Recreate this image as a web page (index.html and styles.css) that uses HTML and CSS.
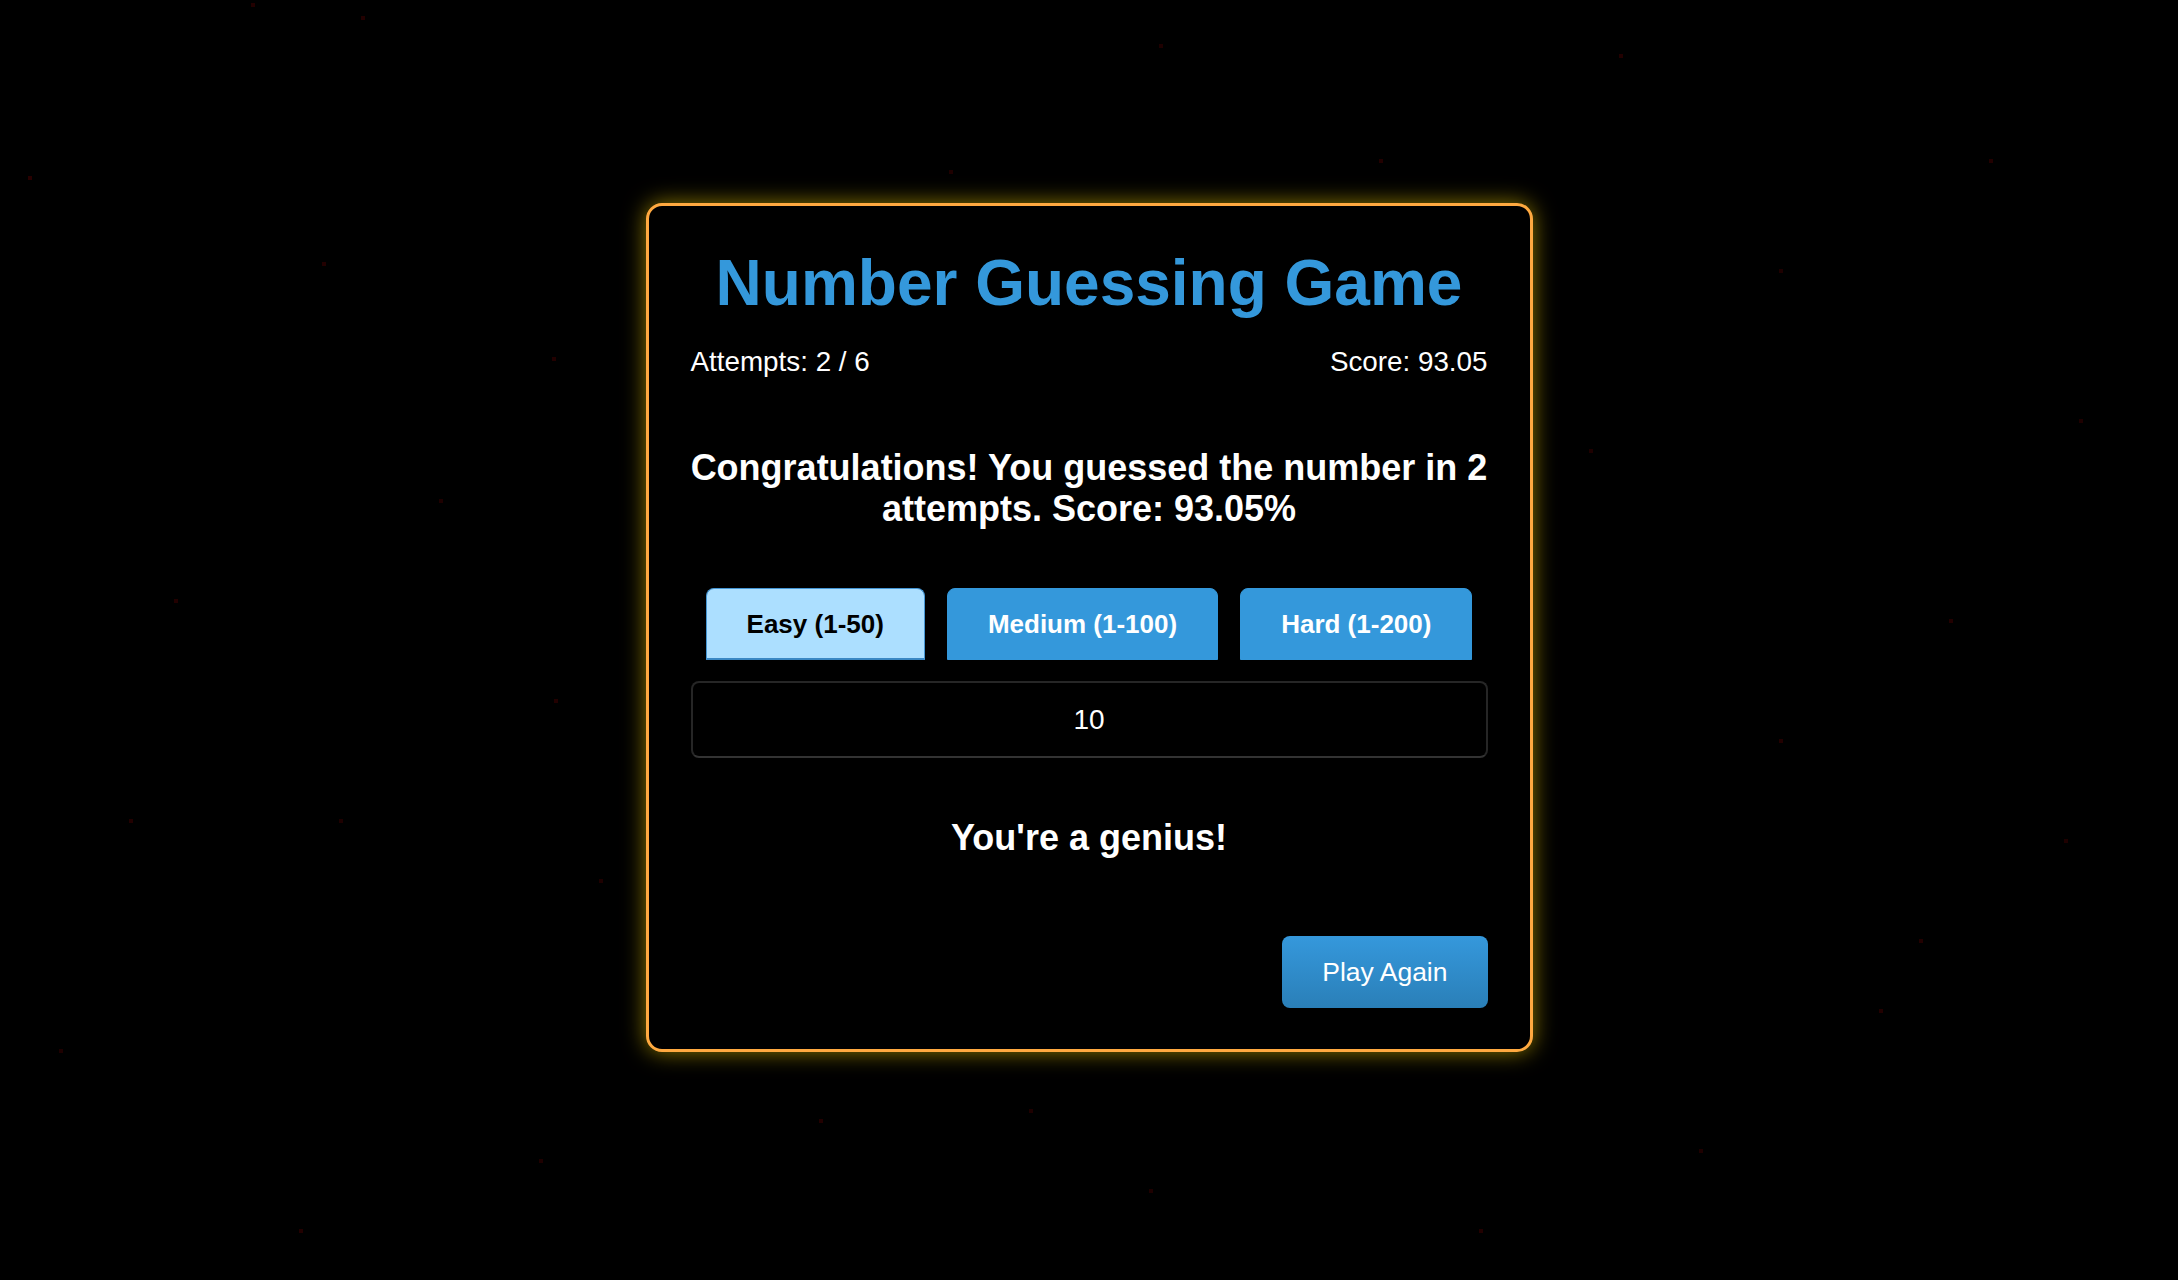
FILE: index.html
```html
<!DOCTYPE html>
<html lang="en">
<head>
<meta charset="utf-8">
<title>Number Guessing Game</title>
<link rel="stylesheet" href="styles.css">
</head>
<body>
<div class="stars" aria-hidden="true"></div>
<main class="card">
  <h1 class="title">Number Guessing Game</h1>
  <div class="stats">
    <span class="stat">Attempts: 2 / 6</span>
    <span class="stat">Score: 93.05</span>
  </div>
  <p class="message">Congratulations! You guessed the number in 2 attempts. Score: 93.05%</p>
  <div class="levels">
    <button class="level level-active">Easy (1-50)</button>
    <button class="level">Medium (1-100)</button>
    <button class="level">Hard (1-200)</button>
  </div>
  <input class="guess" type="text" value="10">
  <p class="feedback">You're a genius!</p>
  <div class="actions">
    <button class="play">Play Again</button>
  </div>
</main>
</body>
</html>
```
FILE: styles.css
```css
html, body {
  margin: 0;
  background: #000;
}

body {
  min-height: 1280px;
  display: flex;
  justify-content: center;
  align-items: flex-start;
  padding-top: 203px;
  box-sizing: border-box;
  font-family: "Liberation Sans", Arial, sans-serif;
  color: #fff;
  position: relative;
  overflow: hidden;
}

.stars {
  position: absolute;
  left: 0;
  top: 0;
  width: 2px;
  height: 2px;
  background: transparent;
  box-shadow:
    252px 4px 0 1px #220000,
    362px 17px 0 1px #220000,
    29px 177px 0 1px #280000,
    323px 263px 0 1px #220000,
    553px 358px 0 1px #220000,
    950px 171px 0 1px #1e0000,
    1160px 45px 0 1px #1e0000,
    1380px 160px 0 1px #220000,
    1620px 55px 0 1px #220000,
    1780px 270px 0 1px #1e0000,
    1990px 160px 0 1px #220000,
    2080px 420px 0 1px #1e0000,
    1950px 620px 0 1px #220000,
    2065px 840px 0 1px #1e0000,
    1880px 1010px 0 1px #220000,
    1700px 1150px 0 1px #1e0000,
    1480px 1230px 0 1px #220000,
    1150px 1190px 0 1px #1e0000,
    820px 1120px 0 1px #220000,
    540px 1160px 0 1px #1e0000,
    300px 1230px 0 1px #220000,
    60px 1050px 0 1px #1e0000,
    130px 820px 0 1px #220000,
    340px 820px 0 1px #1e0000,
    175px 600px 0 1px #220000,
    440px 500px 0 1px #1e0000,
    555px 700px 0 1px #220000,
    600px 880px 0 1px #1e0000,
    1780px 740px 0 1px #220000,
    1590px 450px 0 1px #1e0000,
    1920px 940px 0 1px #220000,
    1030px 1110px 0 1px #1e0000;
}

.card {
  position: relative;
  width: 887px;
  box-sizing: border-box;
  border: 3px solid #ffa940;
  border-radius: 16px;
  padding: 40px 42px 41px;
  background: #000;
  box-shadow: 0 0 22px rgba(255, 220, 0, 0.55);
  display: flex;
  flex-direction: column;
  align-items: stretch;
}

.title {
  margin: 0;
  font-size: 64px;
  line-height: 74px;
  font-weight: 700;
  color: #3498db;
  text-align: center;
}

.stats {
  margin-top: 26px;
  display: flex;
  justify-content: space-between;
  font-size: 27.8px;
  line-height: normal;
}

.message {
  margin: 69px -5px 0;
  font-size: 36px;
  line-height: 41px;
  font-weight: 700;
  text-align: center;
}

.levels {
  margin-top: 59px;
  display: flex;
  justify-content: center;
  gap: 22px;
}

.level {
  font-family: "Liberation Sans", Arial, sans-serif;
  font-size: 26px;
  line-height: 30px;
  font-weight: 700;
  color: #fff;
  background: #3498db;
  border: 1px solid #3498db;
  border-radius: 8px 8px 0 0;
  padding: 20px 40px;
  margin: 0;
}

.level-active {
  background: #acdfff;
  color: #000;
  border-color: #4596d4;
  border-bottom: 2px solid #3a88c4;
  padding-bottom: 19px;
}

.guess {
  margin-top: 21px;
  height: 77px;
  box-sizing: border-box;
  width: 100%;
  background: #000;
  border: 2px solid #262626;
  border-bottom-color: #333;
  border-radius: 8px;
  color: #fff;
  font-family: "Liberation Sans", Arial, sans-serif;
  font-size: 28px;
  text-align: center;
  padding: 0;
  outline: none;
}

.feedback {
  margin: 59px 0 0;
  font-size: 36px;
  line-height: 41px;
  font-weight: 700;
  text-align: center;
}

.actions {
  margin-top: 78px;
  display: flex;
  justify-content: flex-end;
}

.play {
  font-family: "Liberation Sans", Arial, sans-serif;
  font-size: 26.5px;
  line-height: 30px;
  color: #fff;
  background: linear-gradient(#3598dc, #2a7fb8);
  border: none;
  border-radius: 8px;
  padding: 21px 40px;
  margin: 0;
}
```
